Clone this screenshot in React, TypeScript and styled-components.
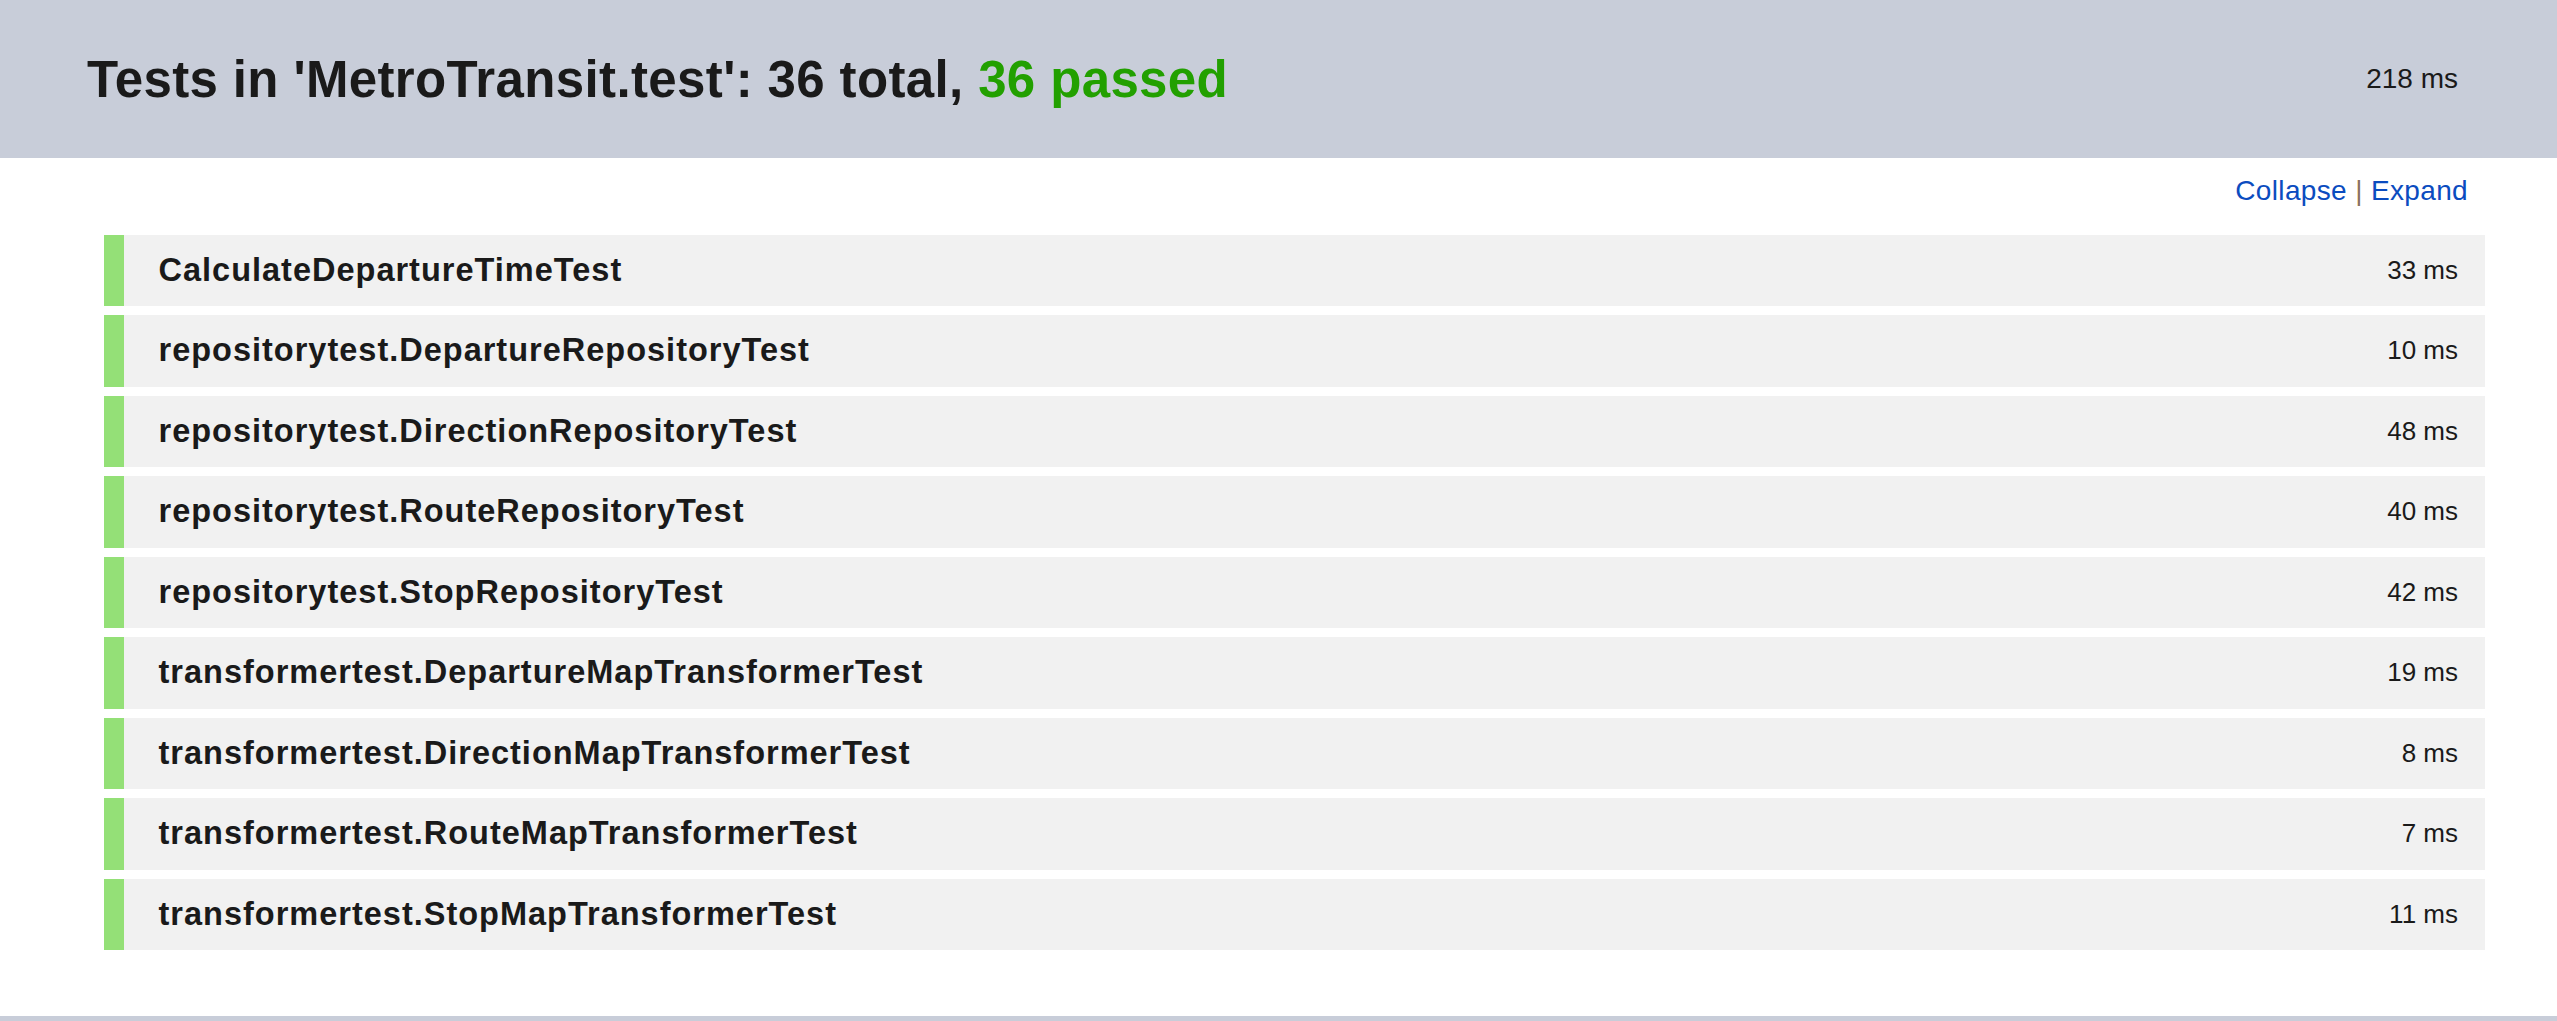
import React from "react";
import styled, { createGlobalStyle } from "styled-components";

const GlobalStyle = createGlobalStyle`
  html, body {
    margin: 0;
    padding: 0;
    background: #ffffff;
    font-family: "Liberation Sans", Arial, sans-serif;
    color: #1a1a1a;
  }
`;

const Page = styled.div`
  display: flex;
  flex-direction: column;
  min-height: 1021px;
`;

const Header = styled.header`
  height: 158px;
  background: #c8cdd9;
  display: flex;
  align-items: center;
  justify-content: space-between;
  padding: 0 99px 0 87px;
  box-sizing: border-box;
`;

const Title = styled.h1`
  margin: 0;
  font-size: 51px;
  font-weight: 700;
  letter-spacing: 0.37px;
  color: #1a1a1a;
  white-space: nowrap;
`;

const Passed = styled.span`
  color: #22a000;
`;

const TotalTime = styled.span`
  font-size: 28px;
  color: #1a1a1a;
`;

const Main = styled.main`
  display: flex;
  flex-direction: column;
  padding: 16.7px 72px 66px 104px;
`;

const Toggles = styled.div`
  align-self: flex-end;
  margin-right: 17px;
  font-size: 28px;
  letter-spacing: 0.35px;
  color: #0b4cbf;
`;

const ToggleLink = styled.a`
  color: #0b4cbf;
  text-decoration: none;
  cursor: pointer;
`;

const Separator = styled.span`
  color: #8a7260;
`;

const List = styled.ul`
  list-style: none;
  margin: 28px 0 0;
  padding: 0;
  display: flex;
  flex-direction: column;
  gap: 9px;
`;

const Row = styled.li<{ $status: "passed" | "failed" }>`
  height: 71.5px;
  box-sizing: border-box;
  display: flex;
  align-items: center;
  justify-content: space-between;
  background: #f1f1f1;
  border-left: 20px solid ${(p) => (p.$status === "passed" ? "#94e077" : "#e07777")};
  padding: 0 27px 0 34.5px;
`;

const Name = styled.span`
  font-size: 32.5px;
  font-weight: 700;
  letter-spacing: 1px;
  color: #1a1a1a;
`;

const Duration = styled.span`
  font-size: 26px;
  color: #1a1a1a;
`;

const Footer = styled.footer`
  flex: 1;
  border-top: 5px solid #c8cdd9;
`;

const tests = [
  { name: "CalculateDepartureTimeTest", ms: 33 },
  { name: "repositorytest.DepartureRepositoryTest", ms: 10 },
  { name: "repositorytest.DirectionRepositoryTest", ms: 48 },
  { name: "repositorytest.RouteRepositoryTest", ms: 40 },
  { name: "repositorytest.StopRepositoryTest", ms: 42 },
  { name: "transformertest.DepartureMapTransformerTest", ms: 19 },
  { name: "transformertest.DirectionMapTransformerTest", ms: 8 },
  { name: "transformertest.RouteMapTransformerTest", ms: 7 },
  { name: "transformertest.StopMapTransformerTest", ms: 11 },
];

export default function App() {
  return (
    <Page>
      <GlobalStyle />
      <Header>
        <Title>
          Tests in 'MetroTransit.test': 36 total, <Passed>36 passed</Passed>
        </Title>
        <TotalTime>218 ms</TotalTime>
      </Header>
      <Main>
        <Toggles>
          <ToggleLink>Collapse</ToggleLink>
          <Separator> | </Separator>
          <ToggleLink>Expand</ToggleLink>
        </Toggles>
        <List>
          {tests.map((t) => (
            <Row key={t.name} $status="passed">
              <Name>{t.name}</Name>
              <Duration>{t.ms} ms</Duration>
            </Row>
          ))}
        </List>
      </Main>
      <Footer />
    </Page>
  );
}
